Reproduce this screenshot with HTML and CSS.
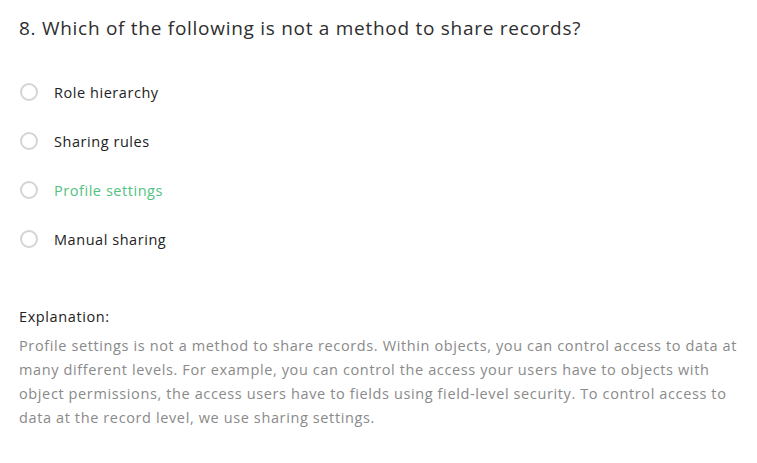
FILE: index.html
```html
<!DOCTYPE html>
<html>
<head>
<meta charset="utf-8">
<link rel="stylesheet" href="styles.css">
</head>
<body>
<div class="quiz">
  <h1 class="question">8. Which of the following is not a method to share records?</h1>
  <ul class="options">
    <li class="option"><span class="radio"></span><span class="label">Role hierarchy</span></li>
    <li class="option"><span class="radio"></span><span class="label">Sharing rules</span></li>
    <li class="option correct"><span class="radio"></span><span class="label">Profile settings</span></li>
    <li class="option"><span class="radio"></span><span class="label">Manual sharing</span></li>
  </ul>
  <div class="explanation">
    <div class="exp-title">Explanation:</div>
    <p class="exp-text">Profile settings is not a method to share records. Within objects, you can control access to data at many different levels. For example, you can control the access your users have to objects with object permissions, the access users have to fields using field-level security. To control access to data at the record level, we use sharing settings.</p>
  </div>
</div>
</body>
</html>
```
FILE: styles.css
```css
html, body {
  margin: 0;
  padding: 0;
  background: #fff;
}
body {
  font-family: "Open Sans", "Liberation Sans", sans-serif;
}
.quiz {
  padding: 14px 0 0 19px;
  width: 722px;
}
.question {
  margin: 0;
  font-size: 19px;
  font-weight: 400;
  color: #2e2e2e;
  line-height: 28px;
  letter-spacing: 0.72px;
}
.options {
  list-style: none;
  margin: 38px 0 0 0;
  padding: 0;
  display: flex;
  flex-direction: column;
  gap: 25px;
}
.option {
  display: flex;
  align-items: center;
  height: 24px;
  font-size: 14.5px;
  color: #222;
  letter-spacing: 0.55px;
}
.radio {
  width: 18px;
  height: 18px;
  border: 2px solid #d4d4d4;
  border-radius: 50%;
  box-sizing: border-box;
  margin-left: 1px;
  margin-right: 16px;
  flex: none;
}
.option.correct {
  color: #52c27f;
}
.explanation {
  margin-top: 54px;
}
.exp-title {
  font-size: 14.5px;
  color: #222;
  line-height: 24px;
  letter-spacing: 0.6px;
}
.exp-text {
  margin: 5px 0 0 0;
  font-size: 14.5px;
  line-height: 24px;
  color: #8a8a8a;
  letter-spacing: 0.62px;
}
```
